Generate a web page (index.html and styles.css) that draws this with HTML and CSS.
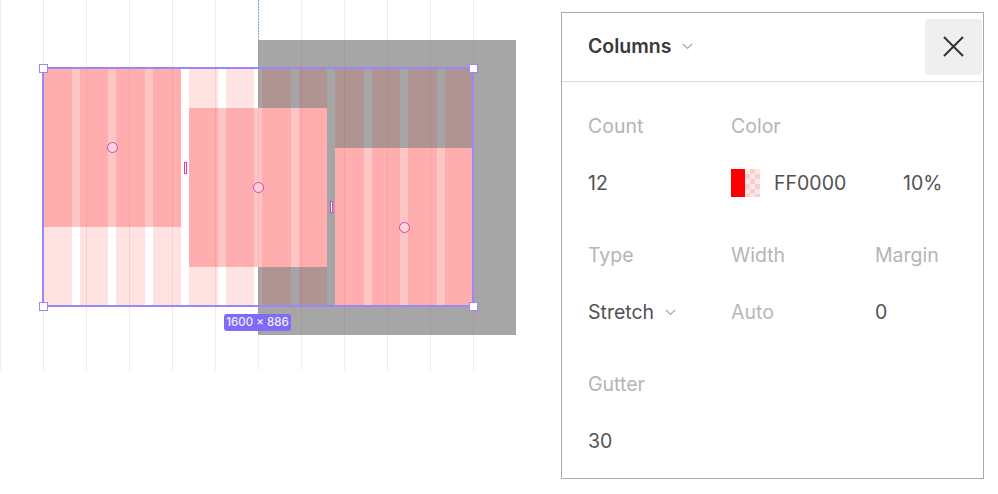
FILE: index.html
```html
<!DOCTYPE html>
<html>
<head>
<meta charset="utf-8">
<link rel="stylesheet" href="styles.css">
</head>
<body>
<div class="canvas">
  <div class="gray-frame"></div>
  <div class="frame f1"></div>
  <div class="frame f2"></div>
  <div class="frame f3"></div>
  <div class="col-grid">
    <span></span><span></span><span></span><span></span><span></span><span></span>
    <span></span><span></span><span></span><span></span><span></span><span></span>
  </div>
  <div class="guides"></div>
  <div class="dotted-guide"></div>
  <div class="selection">
    <span class="handle tl"></span><span class="handle tr"></span>
    <span class="handle bl"></span><span class="handle br"></span>
  </div>
  <span class="center c1"></span>
  <span class="center c2"></span>
  <span class="center c3"></span>
  <span class="gap-mark g1"></span>
  <span class="gap-mark g2"></span>
  <div class="badge">1600 × 886</div>
</div>

<div class="panel">
  <div class="panel-head">
    <div class="title">Columns
      <svg class="chev" width="11" height="7" viewBox="0 0 11 7"><polyline points="1,1 5.5,5.5 10,1" fill="none" stroke="#a8a8a8" stroke-width="1.2"/></svg>
    </div>
    <div class="close">
      <svg width="21" height="21" viewBox="0 0 21 21"><path d="M1 1 L20 20 M20 1 L1 20" stroke="#333" stroke-width="2" fill="none"/></svg>
    </div>
  </div>
  <div class="panel-body">
    <div class="field">
      <div class="label">Count</div>
      <div class="value">12</div>
    </div>
    <div class="field span2">
      <div class="label">Color</div>
      <div class="value color-value">
        <span class="swatch"><span class="swatch-solid"></span><span class="swatch-check"></span></span>
        <span class="hex">FF0000</span>
        <span class="pct">10%</span>
      </div>
    </div>
    <div class="field">
      <div class="label">Type</div>
      <div class="value">Stretch
        <svg class="chev" width="11" height="7" viewBox="0 0 11 7"><polyline points="1,1 5.5,5.5 10,1" fill="none" stroke="#a8a8a8" stroke-width="1.2"/></svg>
      </div>
    </div>
    <div class="field">
      <div class="label">Width</div>
      <div class="value muted">Auto</div>
    </div>
    <div class="field">
      <div class="label">Margin</div>
      <div class="value">0</div>
    </div>
    <div class="field">
      <div class="label">Gutter</div>
      <div class="value">30</div>
    </div>
  </div>
</div>
</body>
</html>
```

FILE: styles.css
```css
* { box-sizing: border-box; }

body {
  margin: 0;
  width: 998px;
  height: 494px;
  background: #fff;
  display: flex;
  align-items: flex-start;
  font-family: Inter, "Noto Sans", "Liberation Sans", sans-serif;
  overflow: hidden;
}

/* ---------- free canvas ---------- */
.canvas {
  position: relative;
  flex: none;
  width: 561px;
  height: 494px;
}

.gray-frame {
  position: absolute;
  left: 258px;
  top: 40px;
  width: 258px;
  height: 295px;
  background: #a6a6a6;
}

.dotted-guide {
  position: absolute;
  left: 258px;
  top: 0;
  width: 1px;
  height: 40px;
  background: repeating-linear-gradient(to bottom, #59acf3 0 2px, transparent 2px 3px);
}

.frame {
  position: absolute;
  width: 138px;
  height: 159px;
  background: #fec5c5;
}
.f1 { left: 43px; top: 68px; }
.f2 { left: 189px; top: 108px; }
.f3 { left: 335px; top: 148px; height: 158px; }

.col-grid {
  position: absolute;
  left: 43px;
  top: 68px;
  width: 430px;
  height: 238px;
  display: flex;
  gap: 8px;
}
.col-grid span {
  flex: 1;
  background: rgba(255, 0, 0, 0.115);
}

.guides {
  position: absolute;
  left: 0;
  top: 0;
  width: 475px;
  height: 370px;
  background: repeating-linear-gradient(to right, rgba(235, 30, 70, 0.11) 0 1px, transparent 1px 43px);
}

.selection {
  position: absolute;
  left: 42px;
  top: 67px;
  width: 432px;
  height: 240px;
  border: 2px solid #9a88f7;
}
.handle {
  position: absolute;
  width: 9px;
  height: 9px;
  background: #fff;
  border: 1.5px solid #9a88f7;
}
.tl { left: -5.5px; top: -5.5px; }
.tr { right: -5.5px; top: -5.5px; }
.bl { left: -5.5px; bottom: -5.5px; }
.br { right: -5.5px; bottom: -5.5px; }

.center {
  position: absolute;
  width: 11px;
  height: 11px;
  border-radius: 50%;
  border: 1.5px solid #e03cc2;
  background: rgba(255, 255, 255, 0.3);
}
.c1 { left: 106.5px; top: 142px; }
.c2 { left: 252.5px; top: 182px; }
.c3 { left: 398.5px; top: 221.5px; }

.gap-mark {
  position: absolute;
  width: 3px;
  height: 12px;
  border: 1px solid #e03cb4;
  background: #fff;
}
.g1 { left: 184px; top: 162px; }
.g2 { left: 330px; top: 201px; }

.badge {
  position: absolute;
  left: 224px;
  top: 314px;
  width: 67px;
  height: 17px;
  border-radius: 3px;
  background: #7f6bf5;
  color: #f0ecff;
  font-size: 11.5px;
  font-weight: 500;
  line-height: 17px;
  text-align: center;
}

/* ---------- panel ---------- */
.panel {
  flex: none;
  margin-top: 12px;
  width: 423px;
  height: 467px;
  border: 1.5px solid #aaaaaa;
  background: #fff;
  display: flex;
  flex-direction: column;
}

.panel-head {
  height: 69px;
  flex: none;
  border-bottom: 1px solid #dcdcdc;
  display: flex;
  align-items: center;
  justify-content: space-between;
  padding: 0 1px 0 26px;
}

.title {
  display: flex;
  align-items: center;
  gap: 11px;
  font-size: 19.5px;
  font-weight: 600;
  color: #3a3a3a;
  padding-bottom: 2px;
}

.close {
  width: 57px;
  height: 56px;
  border-radius: 4px;
  background: #efefef;
  display: flex;
  align-items: center;
  justify-content: center;
  margin-bottom: 1px;
}

.panel-body {
  padding: 32px 0 0 26px;
  display: grid;
  grid-template-columns: 143px 144px 1fr;
  row-gap: 48px;
}

.field {
  display: flex;
  flex-direction: column;
  gap: 33px;
}
.span2 { grid-column: span 2; }

.label,
.value {
  height: 24px;
  line-height: 24px;
  font-size: 19.5px;
  white-space: nowrap;
}
.label { color: #b5b5b5; }
.value {
  color: #525252;
  display: flex;
  align-items: center;
}
.value .chev { margin-left: 11px; }
.muted { color: #b8b8b8; }

.swatch {
  display: flex;
  width: 29px;
  height: 28px;
}
.swatch-solid { width: 14px; background: #ff0000; }
.swatch-check {
  width: 15px;
  background-color: #fde8e8;
  background-image:
    linear-gradient(45deg, #f7cfcf 25%, transparent 25%, transparent 75%, #f7cfcf 75%),
    linear-gradient(45deg, #f7cfcf 25%, transparent 25%, transparent 75%, #f7cfcf 75%);
  background-size: 10px 10px;
  background-position: 0 0, 5px 5px;
}
.hex { margin-left: 14px; width: 129px; }
```
